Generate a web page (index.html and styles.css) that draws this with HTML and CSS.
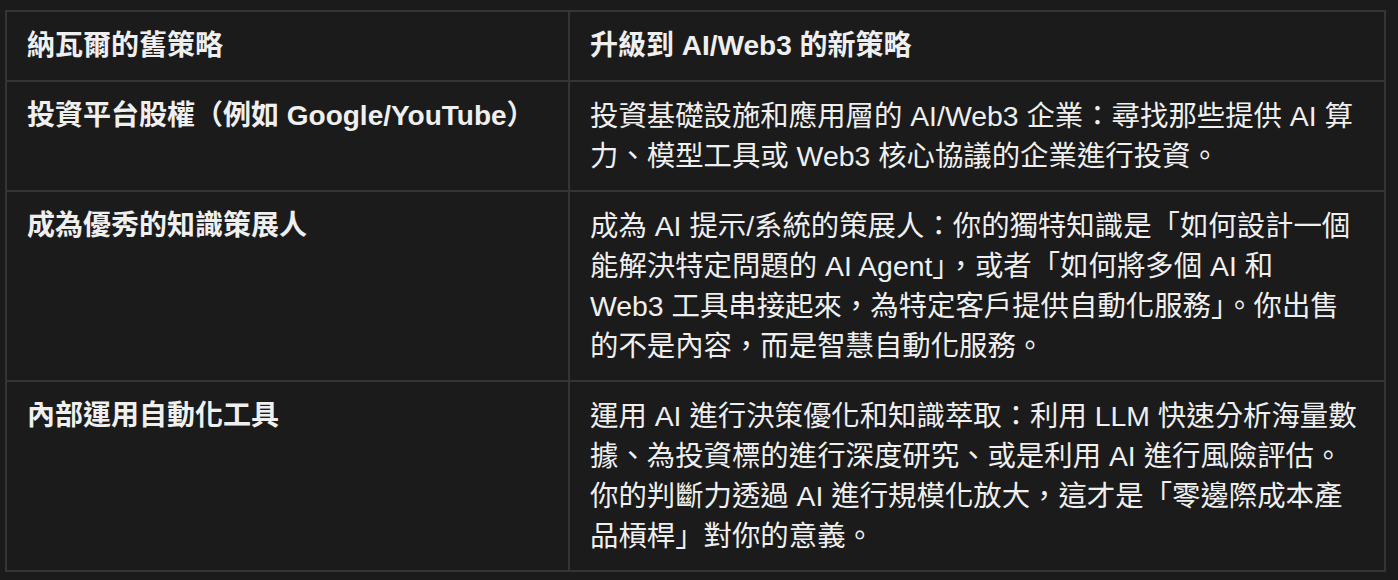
FILE: index.html
```html
<!DOCTYPE html>
<html lang="zh-Hant">
<head>
<meta charset="utf-8">
<title>策略對照</title>
<link rel="stylesheet" href="styles.css">
</head>
<body>
<table class="strategy-table">
  <colgroup>
    <col class="col-old">
    <col class="col-new">
  </colgroup>
  <thead>
    <tr>
      <th>納瓦爾的舊策略</th>
      <th>升級到 AI/Web3 的新策略</th>
    </tr>
  </thead>
  <tbody>
    <tr>
      <td class="label">投資平台股權（例如 Google/YouTube）</td>
      <td>投資基礎設施和應用層的 AI/Web3 企業：尋找那些提供 AI 算<br>力、模型工具或 Web3 核心協議的企業進行投資。</td>
    </tr>
    <tr>
      <td class="label">成為優秀的知識策展人</td>
      <td>成為 AI 提示/系統的策展人：你的獨特知識是「如何設計一個<br>能解決特定問題的 AI Agent」，或者「如何將多個 AI 和<br>Web3 工具串接起來，為特定客戶提供自動化服務」。你出售<br>的不是內容，而是智慧自動化服務。</td>
    </tr>
    <tr>
      <td class="label">內部運用自動化工具</td>
      <td>運用 AI 進行決策優化和知識萃取：利用 LLM 快速分析海量數<br>據、為投資標的進行深度研究、或是利用 AI 進行風險評估。<br>你的判斷力透過 AI 進行規模化放大，這才是「零邊際成本產<br>品槓桿」對你的意義。</td>
    </tr>
  </tbody>
</table>
</body>
</html>
```

FILE: styles.css
```css
html, body {
  background: #1b1b1b;
}

body {
  margin: 0;
  padding: 10px 12px 0 5px;
  font-family: "Liberation Sans", "Noto Sans CJK TC", sans-serif;
  color: #efefef;
}

.strategy-table {
  width: 1381px;
  table-layout: fixed;
  border-collapse: collapse;
  font-size: 28px;
  line-height: 40px;
}

.col-old {
  width: 563px;
}

.col-new {
  width: 816px;
}

.strategy-table th,
.strategy-table td {
  border: 2px solid #353535;
  padding: 14px 20px;
  text-align: left;
  vertical-align: top;
}

.strategy-table th {
  font-weight: 700;
}

.strategy-table td {
  font-weight: 400;
  font-size: 28.4px;
  white-space: nowrap;
}

.strategy-table td.label {
  font-weight: 700;
  font-size: 28px;
}
```
